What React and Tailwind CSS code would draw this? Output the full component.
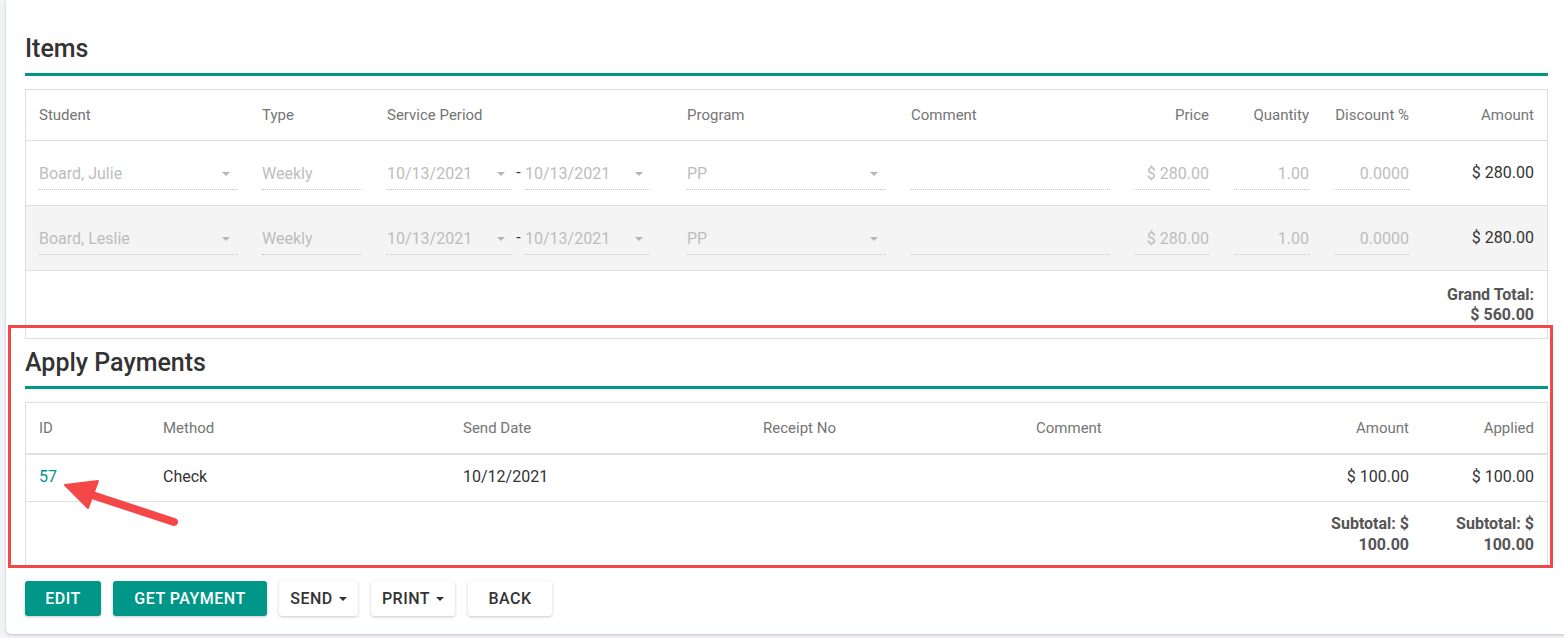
import React from "react";

function Caret() {
  return <span className="w-0 h-0 border-x-[4px] border-x-transparent border-t-[4px] border-t-[#b5b5b5] mr-[7px]" />;
}

function Field({ className, text, caret, right }) {
  return (
    <div
      className={
        "h-[32px] mt-[2px] border-b border-dotted border-[#c4c4c4] flex items-center text-[16px] text-[#bdbdbd] " +
        (right ? "justify-end " : "justify-between ") +
        className
      }
    >
      <span>{text}</span>
      {caret ? <Caret /> : null}
    </div>
  );
}

const itemCols =
  "grid grid-cols-[223px_125px_300px_224px_224px_100px_100px_100px_125px]";
const payCols = "grid grid-cols-[124px_300px_300px_273px_274px_125px_125px]";

function ItemRow({ name, gray }) {
  return (
    <div
      className={
        itemCols +
        " h-[65px] items-center border-b border-[#e0e0e0] " +
        (gray ? "bg-[#f4f4f4]" : "bg-white")
      }
    >
      <div className="pl-[13px]">
        <Field className="w-[198px]" text={name} caret />
      </div>
      <div className="pl-[13px]">
        <Field className="w-[100px]" text="Weekly" />
      </div>
      <div className="pl-[13px] flex items-center">
        <Field className="w-[125px]" text="10/13/2021" caret />
        <span className="w-[13px] text-center text-[16px] text-[#333]">-</span>
        <Field className="w-[125px]" text="10/13/2021" caret />
      </div>
      <div className="pl-[13px]">
        <Field className="w-[198px]" text="PP" caret />
      </div>
      <div className="pl-[13px]">
        <Field className="w-[199px]" text="" />
      </div>
      <div className="pr-[13px] flex justify-end">
        <Field className="w-[75px]" text="$ 280.00" right />
      </div>
      <div className="pr-[13px] flex justify-end">
        <Field className="w-[75px]" text="1.00" right />
      </div>
      <div className="pr-[13px] flex justify-end">
        <Field className="w-[75px]" text="0.0000" right />
      </div>
      <div className="pr-[13px] text-right text-[16px] text-[#333]">$ 280.00</div>
    </div>
  );
}

function Heading({ children, extra }) {
  return (
    <div
      className={
        "text-[25px] leading-[32px] font-medium text-[#333] border-b-[3px] border-[#009688] mb-[13px] " +
        extra
      }
    >
      {children}
    </div>
  );
}

function WhiteBtn({ children, caret, className }) {
  return (
    <button
      className={
        "h-[35px] rounded-[3px] bg-white shadow-[0_1px_3px_rgba(0,0,0,0.22)] flex items-center justify-center gap-[6px] text-[16px] font-medium tracking-[0.5px] text-[#333] " +
        className
      }
    >
      <span>{children}</span>
      {caret ? (
        <span className="w-0 h-0 border-x-[4px] border-x-transparent border-t-[4px] border-t-[#333]" />
      ) : null}
    </button>
  );
}

export default function App() {
  return (
    <div
      className="relative w-[1564px] h-[638px] bg-[#f2f3f7] overflow-hidden"
      style={{ fontFamily: "Roboto, 'Liberation Sans', sans-serif" }}
    >
      <div className="ml-[6px] w-[1600px] bg-white rounded-bl-[5px] shadow-[0_1px_3px_rgba(0,0,0,0.2)] pl-[19px] pt-[33px] pb-[18px]">
        <div className="w-[1523px]">
          <Heading extra="pb-[8px]">Items</Heading>
          <div className="border border-[#dedede]">
            <div className={itemCols + " h-[51px] items-center border-b border-[#e0e0e0] text-[15px] text-[#757575]"}>
              <div className="pl-[13px]">Student</div>
              <div className="pl-[13px]">Type</div>
              <div className="pl-[13px]">Service Period</div>
              <div className="pl-[13px]">Program</div>
              <div className="pl-[13px]">Comment</div>
              <div className="pr-[13px] text-right">Price</div>
              <div className="pr-[13px] text-right">Quantity</div>
              <div className="pr-[13px] text-right">Discount %</div>
              <div className="pr-[13px] text-right">Amount</div>
            </div>
            <ItemRow name="Board, Julie" />
            <ItemRow name="Board, Leslie" gray />
            <div className="h-[67px] flex items-center justify-end pr-[13px]">
              <div className="text-right text-[16px] leading-[20px] font-bold text-[#555]">
                <div>Grand Total:</div>
                <div>$ 560.00</div>
              </div>
            </div>
          </div>

          <Heading extra="mt-[8px] pb-[7px]">Apply Payments</Heading>
          <div className="border border-[#dedede]">
            <div className={payCols + " h-[52px] items-center border-b-2 border-[#e0e0e0] text-[15px] text-[#757575]"}>
              <div className="pl-[13px]">ID</div>
              <div className="pl-[13px]">Method</div>
              <div className="pl-[13px]">Send Date</div>
              <div className="pl-[13px]">Receipt No</div>
              <div className="pl-[13px]">Comment</div>
              <div className="pr-[13px] text-right">Amount</div>
              <div className="pr-[13px] text-right">Applied</div>
            </div>
            <div className={payCols + " h-[47px] items-center border-b border-[#e0e0e0] text-[16px] text-[#333]"}>
              <div className="pl-[13px] text-[#009688] -mt-[2px]">57</div>
              <div className="pl-[13px] -mt-[2px]">Check</div>
              <div className="pl-[13px] -mt-[2px]">10/12/2021</div>
              <div className="pl-[13px]"></div>
              <div className="pl-[13px]"></div>
              <div className="pr-[13px] text-right -mt-[2px]">$ 100.00</div>
              <div className="pr-[13px] text-right -mt-[2px]">$ 100.00</div>
            </div>
            <div className={payCols + " h-[63px] items-center text-[16px] leading-[21px] font-bold text-[#555]"}>
              <div></div>
              <div></div>
              <div></div>
              <div></div>
              <div></div>
              <div className="pr-[13px] text-right">
                <div>Subtotal: $</div>
                <div>100.00</div>
              </div>
              <div className="pr-[13px] text-right">
                <div>Subtotal: $</div>
                <div>100.00</div>
              </div>
            </div>
          </div>

          <div className="mt-[15px] flex gap-[13px]">
            <button className="h-[35px] w-[76px] rounded-[3px] bg-[#009688] text-white text-[16px] font-medium tracking-[0.5px] shadow-[0_1px_3px_rgba(0,0,0,0.22)]">
              EDIT
            </button>
            <button className="h-[35px] w-[154px] rounded-[3px] bg-[#009688] text-white text-[16px] font-medium tracking-[0.5px] shadow-[0_1px_3px_rgba(0,0,0,0.22)] -ml-[1px]">
              GET PAYMENT
            </button>
            <WhiteBtn caret className="w-[79px] -ml-[1px]">SEND</WhiteBtn>
            <WhiteBtn caret className="w-[84px]">PRINT</WhiteBtn>
            <WhiteBtn className="w-[84px]">BACK</WhiteBtn>
          </div>
        </div>
      </div>

      <div className="absolute left-[8px] top-[325px] w-[1545px] h-[243px] border-[3px] border-[#f44848] pointer-events-none" />
      <svg className="absolute left-0 top-0 pointer-events-none" width="1564" height="638">
        <line x1="86" y1="493" x2="174" y2="522" stroke="#f44848" strokeWidth="8" strokeLinecap="round" />
        <polygon points="65,485 98,481 88,508" fill="#f44848" stroke="#f44848" strokeWidth="2" strokeLinejoin="round" />
      </svg>
    </div>
  );
}
